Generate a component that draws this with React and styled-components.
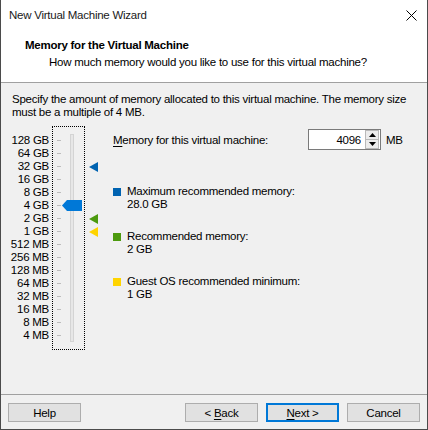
import React from "react"
import styled, { createGlobalStyle } from "styled-components"

const GlobalStyle = createGlobalStyle`
  html, body {
    margin: 0;
    padding: 0;
    background: #f0f0f0;
  }
  * {
    box-sizing: border-box;
  }
`

const ROW = 13

const levels = [
  "128 GB", "64 GB", "32 GB", "16 GB", "8 GB", "4 GB", "2 GB", "1 GB",
  "512 MB", "256 MB", "128 MB", "64 MB", "32 MB", "16 MB", "8 MB", "4 MB",
]

const markers = {
  2: "#0063b1",
  6: "#4c9a0e",
  7: "#ffd400",
}

const legend = [
  { color: "#0063b1", title: "Maximum recommended memory:", value: "28.0 GB" },
  { color: "#4c9a0e", title: "Recommended memory:", value: "2 GB" },
  { color: "#ffd400", title: "Guest OS recommended minimum:", value: "1 GB" },
]

const Window = styled.div`
  width: 428px;
  height: 430px;
  display: flex;
  flex-direction: column;
  background: #f0f0f0;
  border: 1px solid #4b4b4b;
  border-top: none;
  font-family: "Liberation Sans", Arial, sans-serif;
  font-size: 11.5px;
  letter-spacing: -0.25px;
  color: #000;
`

const TitleBar = styled.div`
  height: 30px;
  flex: none;
  display: flex;
  align-items: center;
  justify-content: space-between;
  padding: 0 10px 0 8px;
  background: #fff;
  color: #1a1a1a;
`

const Header = styled.div`
  height: 53px;
  flex: none;
  background: #fff;
  border-bottom: 1px solid #a0a0a0;
  padding: 8px 0 0 24px;
`

const HeaderTitle = styled.div`
  font-weight: bold;
  line-height: 14px;
`

const HeaderSub = styled.div`
  margin-top: 3px;
  padding-left: 24px;
  line-height: 14px;
`

const Body = styled.div`
  flex: 1;
  padding: 10px 10px 0 11px;
`

const Intro = styled.p`
  margin: 0;
  line-height: 13px;
  width: 405px;
`

const Content = styled.div`
  display: flex;
  align-items: flex-start;
  margin-top: 7px;
`

const Column = styled.div`
  display: flex;
  flex-direction: column;
  padding-top: 8px;
`

const Labels = styled(Column)`
  width: 37px;
  text-align: right;
`

const Level = styled.div`
  height: ${ROW}px;
  line-height: ${ROW}px;
  white-space: nowrap;
  display: flex;
  align-items: center;
  justify-content: ${(p) => p.$align || "flex-end"};
`

const SliderBox = styled.div`
  position: relative;
  margin-left: 3px;
  width: 33px;
  height: 224px;
  border: 1px dotted #000;
  display: flex;
  padding: 7px 0 0 4px;
`

const Ticks = styled.div`
  display: flex;
  flex-direction: column;
  width: 4px;
`

const Tick = styled.div`
  height: ${ROW}px;
  display: flex;
  align-items: center;
  &::before {
    content: "";
    display: block;
    width: 4px;
    height: 1px;
    background: #bdbdbd;
  }
`

const Track = styled.div`
  margin-left: 9px;
  width: 4px;
  height: 208px;
  background: #e7e7e7;
  border: 1px solid #d4d4d4;
`

const Thumb = styled.svg`
  position: absolute;
  left: 9px;
  top: ${(p) => 7 + p.$row * ROW + 1}px;
`

const Markers = styled(Column)`
  margin-left: 4px;
  width: 9px;
`

const Settings = styled.div`
  margin-left: 15px;
  padding-top: 3px;
  display: flex;
  flex-direction: column;
`

const AmountRow = styled.div`
  display: flex;
  align-items: center;
  height: 21px;
`

const AmountLabel = styled.span`
  width: 195px;
`

const Mnemonic = styled.span`
  text-decoration: underline;
  text-underline-offset: 2px;
`

const Spinner = styled.div`
  width: 73px;
  height: 21px;
  display: flex;
  align-items: center;
  background: #fff;
  border: 1px solid #7a7a7a;
  padding-right: 1px;
`

const NumberInput = styled.input`
  flex: 1;
  min-width: 0;
  border: none;
  outline: none;
  background: transparent;
  font: inherit;
  letter-spacing: inherit;
  text-align: right;
  padding: 0 4px 0 0;
  color: #000;
`

const SpinButtons = styled.div`
  display: flex;
  flex-direction: column;
  width: 14px;
  height: 19px;
`

const SpinButton = styled.div`
  flex: 1;
  display: flex;
  align-items: center;
  justify-content: center;
  background: #ececec;
  border: 1px solid #b9b9b9;
  & + & {
    border-top: none;
  }
`

const Unit = styled.span`
  margin-left: 5px;
`

const Legend = styled.div`
  margin-top: 35px;
  display: flex;
  flex-direction: column;
  gap: 19px;
`

const LegendItem = styled.div`
  display: grid;
  grid-template-columns: 8px auto;
  column-gap: 6px;
  line-height: 13px;
`

const Swatch = styled.span`
  width: 8px;
  height: 8px;
  margin-top: 3px;
  background: ${(p) => p.$color};
`

const Value = styled.span`
  grid-column: 2;
`

const Footer = styled.div`
  flex: none;
  height: 35px;
  border-top: 1px solid #a0a0a0;
  display: flex;
  align-items: flex-start;
  padding: 8px 6px 0 7px;
`

const Button = styled.div`
  width: 73px;
  height: 19px;
  display: flex;
  align-items: center;
  justify-content: center;
  background: #e1e1e1;
  border: ${(p) => (p.$default ? "2px solid #0078d7" : "1px solid #adadad")};
  margin-left: ${(p) => p.$gap || 0}px;
`

const CloseIcon = () => (
  <svg width="11" height="11" viewBox="0 0 11 11">
    <path d="M0.5 0.5 L10.5 10.5 M10.5 0.5 L0.5 10.5" stroke="#000" strokeWidth="1" fill="none" />
  </svg>
)

const Arrow = ({ up }) => (
  <svg width="7" height="4" viewBox="0 0 7 4">
    <path d={up ? "M3.5 0 L7 4 H0 Z" : "M0 0 H7 L3.5 4 Z"} fill="#000" />
  </svg>
)

const App = () => {
  const current = 5
  return (
    <>
      <GlobalStyle />
      <Window>
        <TitleBar>
          <span>New Virtual Machine Wizard</span>
          <CloseIcon />
        </TitleBar>
        <Header>
          <HeaderTitle>Memory for the Virtual Machine</HeaderTitle>
          <HeaderSub>How much memory would you like to use for this virtual machine?</HeaderSub>
        </Header>
        <Body>
          <Intro>
            Specify the amount of memory allocated to this virtual machine. The memory size
            must be a multiple of 4 MB.
          </Intro>
          <Content>
            <Labels>
              {levels.map((l) => (
                <Level key={l}>{l}</Level>
              ))}
            </Labels>
            <SliderBox>
              <Ticks>
                {levels.map((l) => (
                  <Tick key={l} />
                ))}
              </Ticks>
              <Track />
              <Thumb $row={current} width="20" height="11" viewBox="0 0 20 11">
                <path d="M0 5.5 L5 0 H20 V11 H5 Z" fill="#0078d7" />
              </Thumb>
            </SliderBox>
            <Markers>
              {levels.map((l, i) => (
                <Level key={l} $align="flex-start">
                  {markers[i] && (
                    <svg width="9" height="10" viewBox="0 0 9 10">
                      <path d="M0 5 L9 0 V10 Z" fill={markers[i]} />
                    </svg>
                  )}
                </Level>
              ))}
            </Markers>
            <Settings>
              <AmountRow>
                <AmountLabel>
                  <Mnemonic>M</Mnemonic>emory for this virtual machine:
                </AmountLabel>
                <Spinner>
                  <NumberInput value="4096" readOnly />
                  <SpinButtons>
                    <SpinButton><Arrow up /></SpinButton>
                    <SpinButton><Arrow /></SpinButton>
                  </SpinButtons>
                </Spinner>
                <Unit>MB</Unit>
              </AmountRow>
              <Legend>
                {legend.map((item) => (
                  <LegendItem key={item.title}>
                    <Swatch $color={item.color} />
                    <span>{item.title}</span>
                    <Value>{item.value}</Value>
                  </LegendItem>
                ))}
              </Legend>
            </Settings>
          </Content>
        </Body>
        <Footer>
          <Button>Help</Button>
          <Button $gap={104}>
            <span>&lt; <Mnemonic>B</Mnemonic>ack</span>
          </Button>
          <Button $default $gap={8}>
            <span><Mnemonic>N</Mnemonic>ext &gt;</span>
          </Button>
          <Button $gap={8}>Cancel</Button>
        </Footer>
      </Window>
    </>
  )
}

export default App
